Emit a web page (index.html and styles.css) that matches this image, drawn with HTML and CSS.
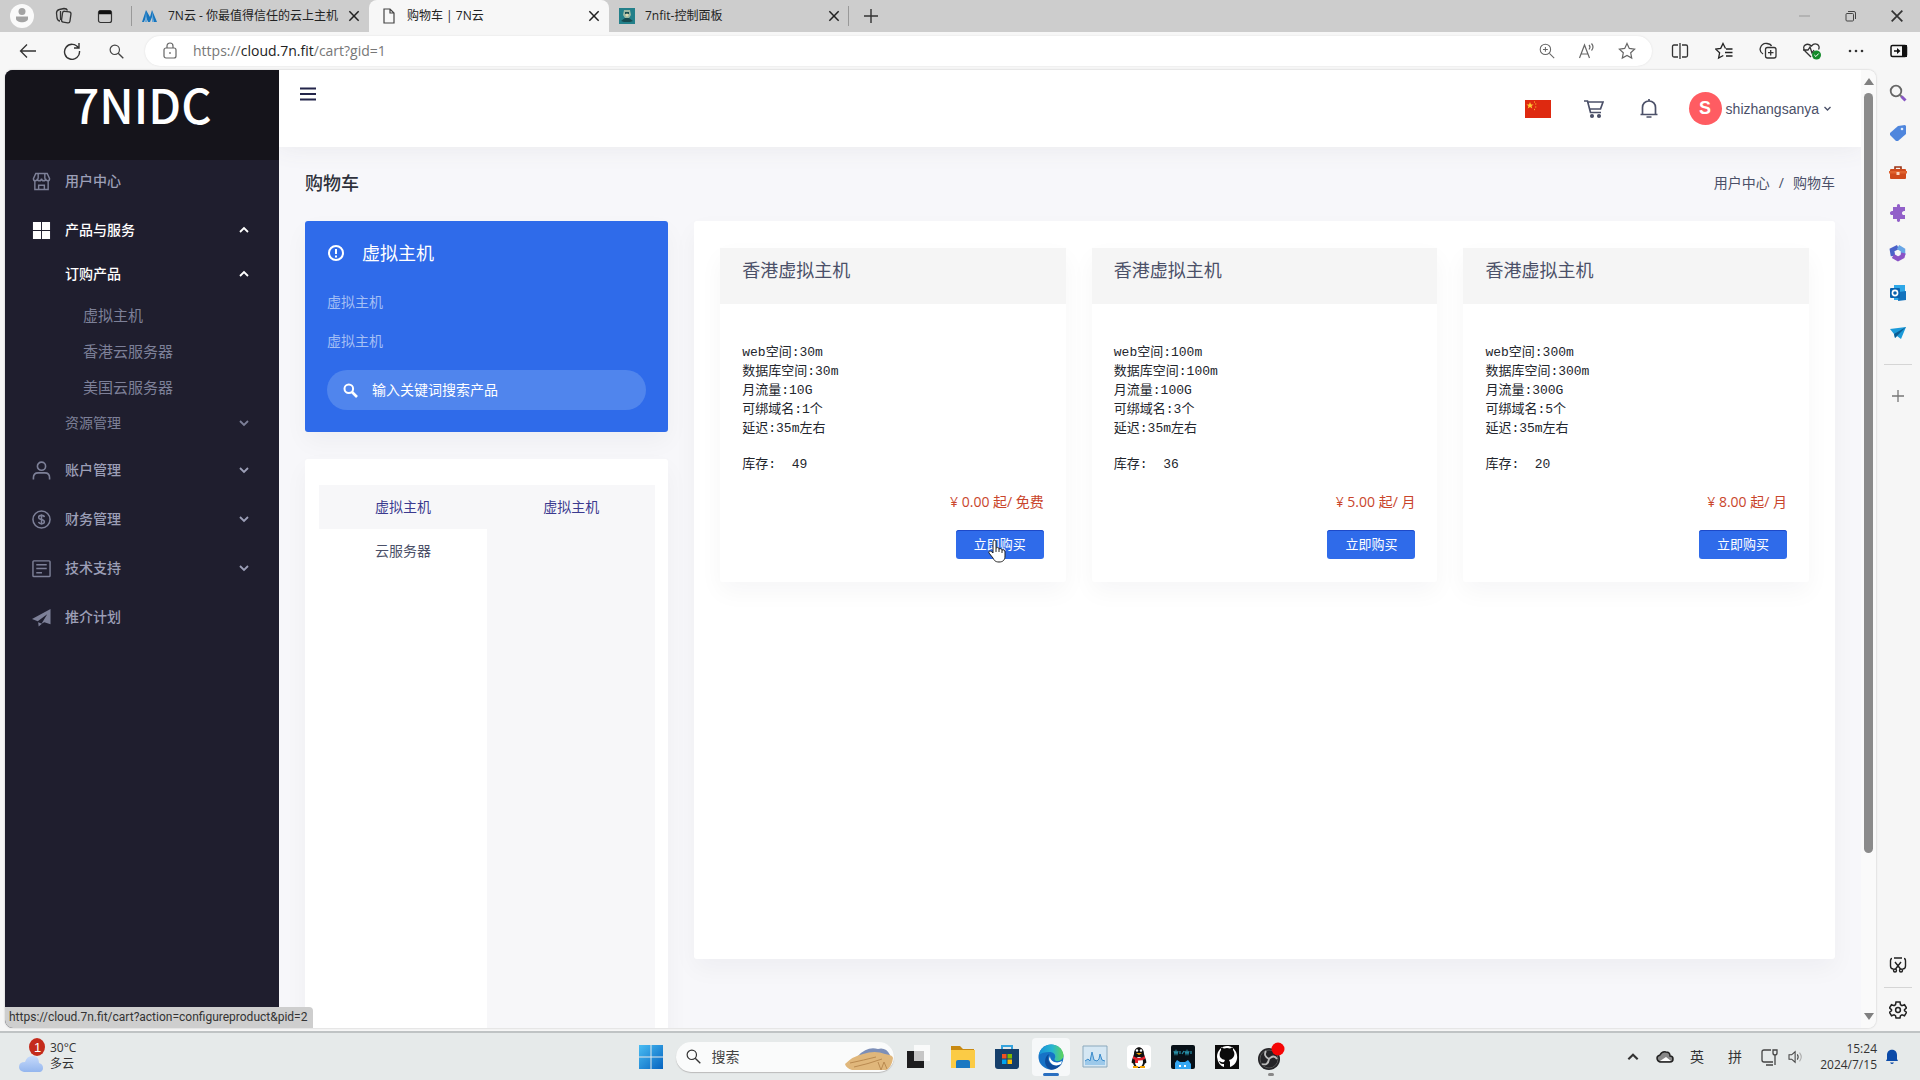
FILE: index.html
```
<!DOCTYPE html>
<html lang="zh-CN">
<head>
<meta charset="utf-8">
<title>购物车 | 7N云</title>
<link rel="stylesheet" href="styles.css">
</head>
<body>
<svg class="defs" aria-hidden="true">
  <symbol id="close" viewBox="0 0 12 12"><path d="M2 2l8 8M10 2l-8 8" fill="none" stroke="currentColor" stroke-width="1.3"/></symbol>
  <symbol id="down" viewBox="0 0 12 12"><path d="M2 4l4 4 4-4" fill="none" stroke="currentColor" stroke-width="1.8"/></symbol>
  <symbol id="up" viewBox="0 0 12 12"><path d="M2 8l4-4 4 4" fill="none" stroke="currentColor" stroke-width="1.8"/></symbol>
  <symbol id="lens" viewBox="0 0 20 20"><circle cx="8" cy="8" r="5.5" fill="none" stroke="currentColor" stroke-width="1.4"/><path d="M12 12l6 6" stroke="currentColor" stroke-width="1.6"/></symbol>
  <symbol id="favicon" viewBox="0 0 16 16"><path d="M0 0h16v16H0z" fill="#23808a"/><path d="M5 2h6l1 5-2 3H6L4 7z" fill="#9bb8a4"/><path d="M6 4h4v2H6zM2 13l4-3h4l4 3-3 1H5z" fill="#174b50"/><circle cx="8" cy="7" r="1.5" fill="#e0d8ae"/></symbol>
</svg>

<header class="tabstrip">
  <button class="strip-btn" aria-label="用户"><svg width="26" height="26" viewBox="0 0 26 26"><circle cx="13" cy="13" r="12" fill="#fafafa"/><circle cx="13" cy="8.500" r="3.500" fill="#a3a3a3"/><path d="M7 13.500h12v2c0 5-12 5-12 0z" fill="#a3a3a3"/></svg></button>
  <button class="strip-btn" aria-label="工作区"><svg width="18" height="18" viewBox="0 0 18 18" fill="none" stroke="#333" stroke-width="1.300"><rect x="7" y="4.500" width="8.500" height="11" rx="2" transform="rotate(8 11 10)"/><path d="M5 14c-2 0-2.500-1-3-3L1.500 6c0-2 1-3 3-3.500L9 1.500c2 0 3 .5 3.500 2M5.500 4v9"/></svg></button>
  <button class="strip-btn" aria-label="标签页操作"><svg width="16" height="16" viewBox="0 0 16 16" fill="none" stroke="#333" stroke-width="1.200"><rect x="1.500" y="2.500" width="13" height="12" rx="2"/><path d="M2 4.500h12" stroke="#111" stroke-width="3.500"/></svg></button>
  <nav class="tabs">
    <div class="tab first">
      <svg class="fav" viewBox="0 0 16 16"><path d="M0 14L4 2l4 7 2-7 5 12h-3l-2-5-2 5H6l-2-5-2 5z" fill="#1675bd"/><path d="M4 3l1 11H3zM10 3l2 11h-2z" fill="#64a7dc"/></svg>
      <span class="tab-title">7N云 - 你最值得信任的云上主机</span>
      <button class="tab-x" aria-label="关闭"><svg width="14" height="14"><use href="#close"/></svg></button>
    </div>
    <div class="tab active">
      <svg class="fav" viewBox="0 0 16 16"><path d="M3 1h6l4 4v10H3zM9 1v4h4" fill="none" stroke="#444" stroke-width="1.200"/></svg>
      <span class="tab-title">购物车 | 7N云</span>
      <button class="tab-x" aria-label="关闭"><svg width="14" height="14"><use href="#close"/></svg></button>
    </div>
    <div class="tab">
      <svg class="fav"><use href="#favicon"/></svg>
      <span class="tab-title">7nfit-控制面板</span>
      <button class="tab-x" aria-label="关闭"><svg width="14" height="14"><use href="#close"/></svg></button>
    </div>
  </nav>
  <button class="strip-btn new" aria-label="新建标签页"><svg width="16" height="16" viewBox="0 0 16 16"><path d="M8 1v14M1 8h14" stroke="#333" stroke-width="1.400"/></svg></button>
  <div class="win">
    <button aria-label="最小化"><svg width="12" height="12"><path d="M0 6h11" stroke="#999" stroke-width="1"/></svg></button>
    <button aria-label="还原"><svg width="12" height="12" fill="none" stroke="#444"><rect x="1" y="3.500" width="7.500" height="7.500" rx="1"/><path d="M3 1.500h6q1.500 0 1.500 1.500v6"/></svg></button>
    <button aria-label="关闭窗口"><svg width="16" height="16"><use href="#close"/></svg></button>
  </div>
</header>

<div class="toolbar">
  <button aria-label="后退"><svg width="18" height="18" viewBox="0 0 18 18" fill="none" stroke="#333" stroke-width="1.300"><path d="M17 9H2M8 2.500L1.500 9 8 15.500"/></svg></button>
  <button aria-label="刷新"><svg width="18" height="18" viewBox="0 0 18 18" fill="none" stroke="#333" stroke-width="1.400"><path d="M15.500 6A7.500 7.500 0 1 0 16.500 9M16 1v5h-5"/></svg></button>
  <button aria-label="搜索"><svg width="17" height="17"><use href="#lens"/></svg></button>
  <div class="address">
    <button aria-label="站点信息"><svg width="16" height="18" viewBox="0 0 16 18" fill="none" stroke="#666" stroke-width="1.200"><rect x="2" y="6" width="12" height="10" rx="2"/><path d="M5 6V4c0-4 6-4 6 0v2M8 10v2"/></svg></button>
    <p class="url">https://<b>cloud.7n.fit</b>/cart?gid=1</p>
    <button aria-label="缩放"><svg width="16" height="16" viewBox="0 0 20 20" fill="none" stroke="#666" stroke-width="1.300"><circle cx="8" cy="8" r="6.500"/><path d="M13 13l6 6M8 5v6M5 8h6"/></svg></button>
    <button aria-label="朗读"><svg width="18" height="18" viewBox="0 0 18 18" fill="none" stroke="#666" stroke-width="1.200"><path d="M1.500 16L6.500 3l5 13M3 12h7M11 3q2 2 0 4.500M13.500 1.500q3 3.500 0 7"/></svg></button>
    <button aria-label="收藏"><svg width="18" height="18" viewBox="0 0 18 18" fill="none" stroke="#666" stroke-width="1.200"><path d="M9 1.500l2.300 4.900 5.300.7-3.900 3.700 1 5.300L9 13.500l-4.700 2.600 1-5.300L1.400 7.100l5.300-.7z"/></svg></button>
  </div>
  <button aria-label="分屏"><svg width="18" height="18" viewBox="0 0 18 18" fill="none" stroke="#333" stroke-width="1.300"><path d="M7 3H3Q1.500 3 1.500 4.500v9Q1.500 15 3 15h4M11 3h4q1.500 0 1.500 1.500v9q0 1.500-1.500 1.500h-4M9 1v16"/></svg></button>
  <button aria-label="收藏夹"><svg width="18" height="18" viewBox="0 0 18 18" fill="none" stroke="#222" stroke-width="1.300"><path d="M10.500 6.500L8 1.500 5.700 6.400l-5 .7 3.900 3.700-1 5.300 4.700-2.600M11 7h6.500M10 10.500h7.500M11 14h6.500"/></svg></button>
  <button aria-label="集锦"><svg width="18" height="18" viewBox="0 0 18 18" fill="none" stroke="#333" stroke-width="1.300"><rect x="6.500" y="5.500" width="10.500" height="10.500" rx="2"/><path d="M11.700 8v5.500M9 10.700h5.500M4 12C1 10 .5 8 1.500 5.500S5 1 8 1.500s4 1 4.500 2.500"/></svg></button>
  <button aria-label="浏览器概要"><svg width="20" height="18" viewBox="0 0 20 18"><path d="M9 15L3 9C-1 4 5 0 9.500 4 13-.5 19 3 16.500 7.500M1 8h5l2-3 2 6 2-3" fill="none" stroke="#333" stroke-width="1.300"/><circle cx="14.500" cy="13" r="4.500" fill="#138a2a"/><path d="M12.300 13l1.600 1.500 2.800-3" fill="none" stroke="#fff"/></svg></button>
  <button aria-label="更多"><svg width="16" height="4" fill="#333"><circle cx="2" cy="2" r="1.300"/><circle cx="8" cy="2" r="1.300"/><circle cx="14" cy="2" r="1.300"/></svg></button>
  <button class="rail-toggle" aria-label="边栏"><svg width="18" height="14" viewBox="0 0 18 14"><rect x="1" y="1.500" width="15.500" height="11" rx="1.500" fill="none" stroke="#111" stroke-width="1.500"/><path d="M12 1h5v12h-5zM4 6.300h3V4l3.500 3L7 10V7.700H4z" fill="#111"/></svg></button>
</div>

<div class="window">
  <div class="viewport">
    <aside class="sidebar">
      <a class="logo" href="#">7NIDC</a>
      <ul class="menu">
        <li><a class="row" href="#"><svg class="mi" viewBox="0 0 20 20" fill="none" stroke="currentColor" stroke-width="1.500"><path d="M3 9v9.500h14V9M4 1.500h12L18.500 7c0 3-4 3-4.300 0 0 3-4 3-4.200 0-.2 3-4.200 3-4.200 0C5.500 10 1.500 10 1.500 7zM7 18.500V14h6v4.500M6.500 2v5M13.500 2v5"/></svg><span>用户中心</span></a></li>
        <li>
          <a class="row on" href="#"><svg class="mi" viewBox="0 0 20 20" fill="currentColor"><path d="M1 1h8.500v8.500H1zM10.500 1H19v8.500h-8.500zM1 10.500h8.500V19H1zM10.500 10.500H19V19h-8.500z"/></svg><span>产品与服务</span><svg class="arr"><use href="#up"/></svg></a>
          <ul class="sub">
            <li><a class="row two on" href="#"><span>订购产品</span><svg class="arr"><use href="#up"/></svg></a>
              <ul class="leaf">
                <li><a href="#">虚拟主机</a></li>
                <li><a href="#">香港云服务器</a></li>
                <li><a href="#">美国云服务器</a></li>
              </ul>
            </li>
            <li><a class="row two" href="#"><span>资源管理</span><svg class="arr"><use href="#down"/></svg></a></li>
          </ul>
        </li>
        <li><a class="row" href="#"><svg class="mi" viewBox="0 0 20 20" fill="none" stroke="currentColor" stroke-width="1.700"><circle cx="10" cy="5.500" r="4.300"/><path d="M1.500 19.500v-2c0-3 2-5 5-5h7c3 0 5 2 5 5v2"/></svg><span>账户管理</span><svg class="arr"><use href="#down"/></svg></a></li>
        <li><a class="row" href="#"><svg class="mi" viewBox="0 0 20 20" fill="none" stroke="currentColor" stroke-width="1.600"><circle cx="10" cy="10" r="9"/><path d="M13 7.500C12.500 5 7 5 7 7.800c0 2.700 6 1.700 6 4.500s-5.500 2.700-6 .2M10 4.500v11"/></svg><span>财务管理</span><svg class="arr"><use href="#down"/></svg></a></li>
        <li><a class="row" href="#"><svg class="mi" viewBox="0 0 20 20" fill="none" stroke="currentColor" stroke-width="1.500"><rect x="1" y="2" width="18" height="16.500" rx="1"/><path d="M4.500 6h11M4.500 10h11M4.500 14.500h6"/></svg><span>技术支持</span><svg class="arr"><use href="#down"/></svg></a></li>
        <li><a class="row" href="#"><svg class="mi" viewBox="0 0 20 20" fill="currentColor"><path d="M19.500 1v16L13 15l-3 1.500 6-10L6 14l-6-2.500zM6.500 15l4 1.500L7 19.500z"/></svg><span>推介计划</span></a></li>
      </ul>
    </aside>

    <div class="page">
      <header class="topbar">
        <button class="burger" aria-label="菜单"><svg width="16" height="14"><path d="M0 1.500h16M0 7h16M0 12.500h16" stroke="#23254a" stroke-width="2.200"/></svg></button>
        <button class="flag" aria-label="中文"><svg width="26" height="18" viewBox="0 0 26 18"><path d="M0 0h26v18H0z" fill="#de2910"/><path d="M5 2l1 2.500h2.600L6.500 6l.8 2.500L5 7 2.700 8.500 3.500 6 1.400 4.500H4z" fill="#fc3"/><path d="M9 1l1 1-1 1zM10.500 3l1 1-1 1zM10.500 6l1 1-1 1zM9 8.500l1 1-1 1z" fill="#fc3"/></svg></button>
        <button class="top-icon" aria-label="购物车"><svg width="20" height="20" viewBox="0 0 20 20" fill="none" stroke="#4b5068" stroke-width="1.700"><path d="M0 2h3.500l3 11.500h10.500M4 3h15l-2.500 7H6"/><circle cx="8" cy="17" r="1.200" fill="#4b5068"/><circle cx="15" cy="17" r="1.200" fill="#4b5068"/></svg></button>
        <button class="top-icon" aria-label="通知"><svg width="20" height="21" viewBox="0 0 20 21" fill="none" stroke="#4b5068" stroke-width="1.700"><path d="M1.500 16.500h17M3.500 16V9.500C3.500 6 6 3 10 3s6.500 3 6.500 6.500V16M10 3V1M7.500 19h5"/></svg></button>
        <button class="user"><span class="avatar">S</span><span>shizhangsanya</span><svg width="9" height="9"><use href="#down"/></svg></button>
      </header>

      <main class="content">
        <div class="heading">
          <h1>购物车</h1>
          <nav class="crumb"><a href="#">用户中心</a><span>/</span><span>购物车</span></nav>
        </div>
        <div class="columns">
          <div class="left">
            <section class="intro">
              <h2><svg width="18" height="18" viewBox="0 0 18 18" fill="none" stroke="#fff" stroke-width="2"><circle cx="9" cy="9" r="7"/><path d="M9 5v5M9 11.500v2"/></svg>虚拟主机</h2>
              <p>虚拟主机</p>
              <p>虚拟主机</p>
              <label class="search"><svg width="15" height="15" viewBox="0 0 15 15" fill="none" stroke="#fff" stroke-width="2"><circle cx="5.800" cy="5.800" r="4.300"/><path d="M9 9l5 5" stroke-width="2.600"/></svg><input type="text" aria-label="搜索产品" placeholder="输入关键词搜索产品"></label>
            </section>
            <section class="groups">
              <div class="group"><a class="chosen" href="#">虚拟主机</a><a href="#">云服务器</a></div>
              <div class="group shaded"><a class="chosen" href="#">虚拟主机</a></div>
            </section>
          </div>
          <section class="products">
            <article class="product">
              <h3>香港虚拟主机</h3>
              <div class="body">
                <div class="spec">web空间:30m<br>数据库空间:30m<br>月流量:10G<br>可绑域名:1个<br>延迟:35m左右<p>库存: &nbsp;49</p></div>
                <p class="price">¥ 0.00 起/ 免费</p>
                <div class="buy-wrap"><button class="buy">立即购买</button>
                <svg class="cursor" width="18" height="24" viewBox="0 0 18 24"><path d="M5 14V3c0-2.500 3-2.500 3 0v6c2-1 3-.3 3 1 1.500-.8 2.800-.2 3 1 2-.6 3 .5 3 2v4c0 4-2 6-6 6-4 0-5-2-6-4l-4-5c-1-2 1.500-3 4 0z" fill="#fff" stroke="#222"/><path d="M8 9v4M11 10v3M14 11v3" stroke="#222"/></svg></div>
              </div>
            </article>
            <article class="product">
              <h3>香港虚拟主机</h3>
              <div class="body">
                <div class="spec">web空间:100m<br>数据库空间:100m<br>月流量:100G<br>可绑域名:3个<br>延迟:35m左右<p>库存: &nbsp;36</p></div>
                <p class="price">¥ 5.00 起/ 月</p>
                <div class="buy-wrap"><button class="buy">立即购买</button></div>
              </div>
            </article>
            <article class="product">
              <h3>香港虚拟主机</h3>
              <div class="body">
                <div class="spec">web空间:300m<br>数据库空间:300m<br>月流量:300G<br>可绑域名:5个<br>延迟:35m左右<p>库存: &nbsp;20</p></div>
                <p class="price">¥ 8.00 起/ 月</p>
                <div class="buy-wrap"><button class="buy">立即购买</button></div>
              </div>
            </article>
          </section>
        </div>
      </main>
    </div>
    <div class="scroll"><i class="tri"></i><i class="thumb"></i><i class="tri flip"></i></div>
    <div class="status">https://cloud.7n.fit/cart?action=configureproduct&amp;pid=2</div>
  </div>

  <nav class="rail">
    <button aria-label="搜索"><svg width="18" height="18" viewBox="0 0 18 18" fill="none"><circle cx="7" cy="7" r="5.300" stroke="#666" stroke-width="1.800"/><path d="M11 11l2 2" stroke="#777" stroke-width="2"/><path d="M12.500 12.500l4 4" stroke="#8857c4" stroke-width="3"/></svg></button>
    <button aria-label="购物"><svg width="18" height="18" viewBox="0 0 18 18"><path d="M9 2l7-1 1 1v8L9 17H7L1 11V9z" fill="#4f86dd"/><circle cx="13" cy="5" r="1.300" fill="#dceaff"/></svg></button>
    <button aria-label="工具"><svg width="18" height="18" viewBox="0 0 18 18"><path d="M6 6V3h6v3" fill="none" stroke="#9c3314" stroke-width="1.600"/><rect x="1" y="5" width="16" height="10" rx="1" fill="#cf4a1c"/><path d="M0 7h18v2.500H0z" fill="#e0632f"/><path d="M7.500 8h3v3h-3z" fill="#fbd8c4"/></svg></button>
    <button aria-label="游戏"><svg width="18" height="20" viewBox="0 0 18 20"><path d="M4 4h4c-1-4 4-4 3 0h5v4c-4-1-4 5 0 4v4h-5c1 4-4 4-3 0H4v-4c-4 1-4-5 0-4z" fill="#9260c9"/></svg></button>
    <button aria-label="Microsoft 365"><svg width="18" height="18" viewBox="0 0 18 18" fill="none" stroke-width="4.500"><path d="M4 12L3 6l6-3" stroke="#4b62c9"/><path d="M9 3l5 3v5" stroke="#68a6e6"/><path d="M14.500 9l-1 3.500L9 15l-5-3" stroke="#8a53c6"/></svg></button>
    <button aria-label="Outlook"><svg width="18" height="18" viewBox="0 0 18 18"><path d="M5 1h11v15H5z" fill="#2fa8e8"/><path d="M10 8l7-1v9l-8 1z" fill="#1373bd"/><rect x="1" y="4" width="10" height="10" rx="1" fill="#0a62ad"/><circle cx="6" cy="9" r="2.600" fill="none" stroke="#fff" stroke-width="1.600"/></svg></button>
    <button aria-label="Drop"><svg width="18" height="18" viewBox="0 0 18 18"><path d="M1 5l16-2-5 12-4-3-2 2-1-4z" fill="#1b9ad9"/><path d="M5 10l12-7-9 9-2 2z" fill="#0c5c93"/></svg></button>
    <hr>
    <button aria-label="添加"><svg width="14" height="14"><path d="M7 1v12M1 7h12" stroke="#777" stroke-width="1.300"/></svg></button>
    <span class="grow"></span>
    <button class="low" aria-label="截图"><svg width="18" height="16" viewBox="0 0 18 16" fill="none" stroke="#222" stroke-width="1.400"><path d="M5 1h8M3 1.500Q1.500 1.500 1.500 4v5q0 3 3 3M15 1.500q1.500 0 1.500 2.500v5q0 3-3 3M6 5l5.500 7M12 5l-5.500 7"/><circle cx="6" cy="13.500" r="1.500"/><circle cx="12" cy="13.500" r="1.500"/></svg></button>
    <hr>
    <button class="low" aria-label="设置"><svg width="18" height="18" viewBox="0 0 18 18" fill="none" stroke="#222" stroke-width="1.500"><path d="M7 1h4l.5 2.700 1.500.9 2.500-1 2 3.400-2 1.700v1l2 1.700-2 3.400-2.500-1-1.500.9L11 17H7l-.5-2.300-1.500-.9-2.500 1-2-3.400 2-1.700v-1l-2-1.700 2-3.400 2.500 1 1.500-.9z"/><circle cx="9" cy="9" r="2.400"/></svg></button>
  </nav>
</div>

<footer class="taskbar">
  <div class="weather">
    <svg width="28" height="38" viewBox="0 0 28 38"><defs><linearGradient id="cloud" y2="1" x2="0"><stop stop-color="#c6dafb"/><stop offset="1" stop-color="#94b6ee"/></linearGradient></defs><path d="M6 36q-5-1-5-5 0-5 6-5 2-7 9-6 5 1 5 7 4 1 4 5 0 3-3 4z" fill="url(#cloud)"/><ellipse cx="19" cy="11" rx="8" ry="9" fill="#c42b1c"/><text x="16" y="16" font-size="13" fill="#fff">1</text></svg>
    <p>30°C<br>多云</p>
  </div>
  <div class="apps">
    <button aria-label="开始"><svg width="24" height="24" viewBox="0 0 24 24"><defs><linearGradient id="win" x2="1" y2="1"><stop stop-color="#49bdf3"/><stop offset="1" stop-color="#0663c0"/></linearGradient></defs><path d="M0 0h11.500v11.500H0zM12.500 0H24v11.500H12.500zM0 12.500h11.500V24H0zM12.500 12.500H24V24H12.500z" fill="url(#win)"/></svg></button>
    <label class="find"><svg width="17" height="17"><use href="#lens"/></svg><input type="text" placeholder="搜索" aria-label="搜索"><svg width="50" height="30" viewBox="0 0 50 30"><path d="M14 14q9-10 20-7 8-2 12 6v4H14z" fill="#7d8fb8"/><path d="M1 22q8-8 18-10 12-4 22 0 8 1 8 4-1 8-6 12H8q-6-2-7-6z" fill="#e0b77b"/><path d="M6 21q14-3 26-6M10 25q14-3 28-8M34 20l3 8 3-8 3 7" fill="none" stroke="#b98a50"/></svg></label>
    <button aria-label="任务视图"><svg width="26" height="26" viewBox="0 0 26 26"><path d="M1 7h17v17H1z" fill="#1d1d1f"/><path d="M8 1h16v16H8z" fill="#fff" opacity=".75"/></svg></button>
    <button aria-label="文件资源管理器"><svg width="26" height="26" viewBox="0 0 26 26"><path d="M1 2h9l3 3h11v7H1z" fill="#c98a12"/><path d="M1 6h24v18H1z" fill="#fbcb45"/><path d="M6 24v-6q0-2 2-2h10q2 0 2 2v6z" fill="#1a78c2"/></svg></button>
    <button aria-label="Microsoft Store"><svg width="26" height="26" viewBox="0 0 26 26"><path d="M8 6V2h10v4" fill="none" stroke="#36a3dd" stroke-width="2"/><path d="M1 5h24v17q0 3-3 3H4q-3 0-3-3z" fill="#153f6b"/><path d="M8 10h4.500v4.500H8z" fill="#f25022"/><path d="M13.500 10H18v4.500h-4.500z" fill="#7fba00"/><path d="M8 15.500h4.500V20H8z" fill="#00a4ef"/><path d="M13.500 15.500H18V20h-4.500z" fill="#ffb900"/></svg></button>
    <button class="current" aria-label="Microsoft Edge"><svg width="26" height="26" viewBox="0 0 26 26"><defs><linearGradient id="edge" x2="1"><stop stop-color="#1691d8"/><stop offset=".55" stop-color="#28b6cf"/><stop offset="1" stop-color="#5ed557"/></linearGradient></defs><circle cx="13" cy="13" r="12.500" fill="#1672c6"/><path d="M1 11C3-3 24-3 25.500 11c.5 6-9 8-9 4 2-3 0-7-5-7C7 8 3 9 1 11z" fill="url(#edge)"/><path d="M11.500 10C8 14 11 22 18 21.500q4 0 6-2-5 7-12 6C5 22 6 12 11.500 10z" fill="#0d4c9b"/><path d="M12 12c0 6 7 8 12 5l-1 3c-5 3-11 1-12-5z" fill="#fff"/></svg></button>
    <button aria-label="性能监视"><svg width="26" height="24" viewBox="0 0 26 24"><path d="M1 1h24v21H1z" fill="#d5e7f3" stroke="#8ba9bd"/><path d="M3 20v-4l3-2 2 2 2-9 2 8 3 1 2-2 1-5 2 6 3 1v4z" fill="#9cc9ea"/><path d="M3 16l3-2 2 2 2-9 2 8 3 1 2-2 1-5 2 6 3 1" fill="none" stroke="#3c8ccb"/></svg></button>
    <button aria-label="QQ"><svg width="26" height="26" viewBox="0 0 26 26"><rect x="1" y="1" width="24" height="24" rx="4" fill="#fff"/><path d="M8 10c0-9 10-9 10 0l2 6q1 4-1 3-1 5-6 5t-6-5q-2 1-1-3z" fill="#111"/><ellipse cx="13" cy="18" rx="4" ry="5" fill="#fff"/><path d="M7 12q6 4 12 0v3q-6 3-12 0zM9 14h3v5H9z" fill="#e3202c"/><path d="M10 9h6l-3 2zM7 22h5v2H7zM14 22h5v2h-5z" fill="#f5a300"/><circle cx="11" cy="6.500" r="1.200" fill="#fff"/><circle cx="15" cy="6.500" r="1.200" fill="#fff"/></svg></button>
    <button aria-label="应用"><svg width="26" height="26" viewBox="0 0 26 26"><rect x="1" y="1" width="24" height="24" rx="2" fill="#071017"/><path d="M4 7l1 3 1-3 1 3 1-3M10 7v3M12 10l2-3M15 7l1 3 1-3 1 3 1-3M21 7v3" fill="none" stroke="#278ea6" stroke-width="1.200"/><path d="M5 25v-6l2-3 3 2h5l3-2 3 4v5z" fill="#35a7f2"/><path d="M10 21v2M15 21v2" stroke="#fff" stroke-width="2"/></svg></button>
    <button aria-label="GitHub"><svg width="26" height="26" viewBox="0 0 26 26"><path d="M1 1h24v24H1z" fill="#0b0b0b"/><path d="M10 23v-3c-3 .5-4-1-5-3 2 0 2 2 5 1l1-2c-5-1-6-4-5-8l1-2V3l3 1.500q3-1 6 0L19 3v3c3 4 1 9-4 10l1 2v5c9-3 9-14 3-19C12-1 3 4 3 13q1 8 7 10z" fill="#fff"/></svg></button>
    <button class="running" aria-label="OBS"><svg width="28" height="30" viewBox="0 0 28 30"><circle cx="12" cy="17" r="11" fill="#252427"/><circle cx="12" cy="17" r="9" fill="none" stroke="#555"/><path d="M9 9q-3 5 3 8 5-5 8 0M12 17q-1 7-7 5" fill="none" stroke="#bbb" stroke-width="1.800"/><circle cx="21" cy="7" r="6.500" fill="#f50505"/></svg></button>
  </div>
  <div class="tray">
    <button aria-label="更多图标"><svg width="14" height="14"><use href="#up"/></svg></button>
    <button aria-label="OneDrive"><svg width="18" height="14" viewBox="0 0 18 14"><path d="M4 12q-3-1-3-4 0-2 3-3 2-4 6-3 4 0 4 4 3 0 3 3t-3 3z" fill="#888" stroke="#222" stroke-width="1.500"/><path d="M4 11l6-4 5 4z" fill="#fff"/></svg></button>
    <button class="ime">英</button>
    <button class="ime two">拼</button>
    <button class="net" aria-label="网络"><svg width="18" height="18" viewBox="0 0 18 18" fill="none" stroke="#444" stroke-width="1.300"><path d="M10 2H3Q1 2 1 4v8q0 2 2 2h9M5 17h7M14 7v10M12 2v3q0 2 2 2t2-2V2z"/></svg></button>
    <button class="net" aria-label="音量"><svg width="16" height="14" viewBox="0 0 18 16" fill="none" stroke="#444" stroke-width="1.200"><path d="M1 5.500h3L8 2v12l-4-3.500H1zM10.500 5q2 3 0 6"/><path d="M13 3q4 5 0 10" stroke="#aaa"/></svg></button>
    <p class="clock">15:24<br>2024/7/15</p>
    <button class="bell" aria-label="通知"><svg width="14" height="16" viewBox="0 0 14 16" fill="#0b4aa8"><path d="M1 12l1-2V6c0-7 10-7 10 0v4l1 2zM5 13.500h4q-2 3-4 0z"/></svg></button>
  </div>
</footer>
</body>
</html>
```

FILE: styles.css
```
* { box-sizing: border-box; }
body {
  margin: 0;
  height: 100vh;
  display: flex;
  flex-direction: column;
  overflow: hidden;
  background: #f6f6f6;
  color: #333;
  font: 14px/20px "Open Sans", "Noto Sans CJK SC", sans-serif;
}
button, input { font: inherit; color: inherit; border: 0; background: none; padding: 0; margin: 0; }
button { display: flex; align-items: center; justify-content: center; flex: none; }
a { color: inherit; text-decoration: none; }
h1, h2, h3, p, ul { margin: 0; padding: 0; font-weight: normal; }
ul { list-style: none; }
svg { flex: none; }
.defs { position: absolute; width: 0; height: 0; }

/* browser tabs */
.tabstrip { display: flex; flex: none; height: 32px; background: #cdcdcd; }
.strip-btn { width: 41px; }
.tabstrip > .strip-btn:first-child { width: 43px; }
.tabs { display: flex; margin-left: 6px; font-size: 12px; color: #222; }
.tab { display: flex; align-items: center; width: 240px; padding: 0 7px 0 10px; position: relative; }
.tab.first { width: 238px; padding-left: 11px; }
.tab.first::before, .tab:last-child::after { content: ""; width: 1px; height: 20px; background: #999; position: absolute; top: 6px; left: 0; }
.tab:last-child::after { left: auto; right: 0; }
.tab.active { background: #f7f7f7; border-radius: 8px 8px 0 0; padding-left: 12px; }
.fav { width: 16px; height: 16px; margin-right: 10px; }
.tab-title { flex: 1; white-space: nowrap; }
.tab-x { width: 16px; margin-left: 2px; }
.new { width: 44px; }
.win { display: flex; margin-left: auto; }
.win button { width: 46px; }

/* address bar */
.toolbar { display: flex; flex: none; height: 38px; padding-left: 6px; background: #f7f7f7; color: #444; }
.toolbar > button { width: 44px; }
.toolbar > .rail-toggle { width: 42px; }
.address { display: flex; align-items: center; flex: 1; margin: 4px 6px 4px 7px; padding: 0 5px; background: #fff; border-radius: 15px; box-shadow: 0 0 2px #ddd; }
.address button { width: 40px; }
.url { flex: 1; padding-left: 3px; color: #777; }
.url b { font-weight: normal; color: #222; }

.window { display: flex; flex: 1; min-height: 0; padding: 0 0 3px 5px; }
.viewport { display: flex; flex: 1; position: relative; overflow: hidden; border-radius: 8px; background: #f7f7fa; box-shadow: 0 0 2px #bbb; }

/* site navigation */
.sidebar { width: 274px; flex: none; position: relative; z-index: 1; background: #1f1e2e; color: #9c9fb7; }
.logo { display: flex; justify-content: center; height: 90px; background: #15141b; color: #fff; font: 500 47px/67px "Noto Sans CJK SC", sans-serif; }
.menu { display: flex; flex-direction: column; gap: 7px; }
.row { display: flex; align-items: center; height: 42px; padding: 0 29px 0 27px; font-weight: 500; }
.mi { width: 19px; height: 19px; margin-right: 14px; color: #7d8098; }
.row span { flex: 1; }
.arr { width: 12px; height: 12px; }
.on, .on .mi { color: #fff; }
.sub { padding: 5px 0 1px; }
.row.two { height: 36px; padding-left: 60px; font-weight: 400; color: #7d8098; }
.row.two.on { color: #fff; font-weight: 500; }
.leaf { padding-top: 5px; }
.leaf a { display: block; padding-left: 78px; font-size: 15px; line-height: 36px; color: #7d8098; }

.page { flex: 1; min-width: 0; color: #4b5068; }
.topbar { display: flex; align-items: center; height: 77px; padding: 0 29px 0 21px; background: #fff; box-shadow: 0 0 24px #e8e8ec; }
.burger { margin-right: auto; align-self: flex-start; padding-top: 17px; }
.flag { margin-right: 33px; }
.top-icon { margin-right: 35px; }
.user { gap: 4px; margin-left: -5px; font: 14px/20px "Liberation Sans", sans-serif; }
.avatar { width: 33px; height: 33px; border-radius: 50%; background: #ff5c62; color: #fff; font-weight: bold; font-size: 18px; line-height: 33px; }

.content { padding: 24px 26px; }
.heading { display: flex; justify-content: space-between; align-items: center; height: 24px; margin-bottom: 26px; }
h1 { font-size: 18px; font-weight: 500; color: #2f323c; }
.crumb { display: flex; gap: 9px; }
.columns { display: grid; grid-template-columns: 121fr 380fr; gap: 26px; align-items: start; }
.left { display: grid; gap: 27px; }
.intro, .groups, .products, .product { border-radius: 3px; box-shadow: 0 10px 24px rgba(30, 35, 60, .04); }
.intro { padding: 20px 22px 22px; background: #2f6bea; color: #fff; }
.intro h2 { display: flex; align-items: center; gap: 17px; height: 24px; margin-bottom: 27px; font-size: 18px; }
.intro p { margin-bottom: 19px; color: #a4bff5; }
.search { display: flex; align-items: center; height: 40px; padding: 0 16px; border-radius: 20px; background: #5085ed; }
.search input { flex: 1; min-width: 0; margin-left: 14px; }
.search input::placeholder { color: #fff; opacity: 1; }
.groups { display: grid; grid-template-columns: 1fr 1fr; min-height: 640px; padding: 26px 13px 26px 14px; background: #fff; text-align: center; }
.group a { display: block; line-height: 44px; }
.group .chosen, .shaded { background: #f7f7f9; }
.group .chosen { color: #3b3a8f; }

.products { display: grid; grid-template-columns: repeat(3, 1fr); gap: 26px; align-items: start; min-height: 738px; padding: 27px 26px; background: #fff; }
.product h3 { padding: 9px 22px 21px; background: #f5f5f5; font-size: 18px; line-height: 26px; }
.body { padding: 39px 22px 23px; }
.spec { font: 13px/19px "Liberation Mono", "Noto Sans CJK SC", monospace; color: #23262d; }
.spec p { margin-top: 17px; }
.price { margin: 18px 0; text-align: right; color: #c9452b; }
.buy-wrap { display: flex; justify-content: flex-end; position: relative; }
.buy { width: 88px; height: 29px; border-radius: 3px; background: #2f6bea; color: #fff; font-size: 13px; box-shadow: inset 0 1px #1d49c9; padding-bottom: 2px; }
.cursor { position: absolute; right: 38px; top: 9px; }

.scroll { display: flex; flex-direction: column; align-items: center; width: 15px; padding: 8px 0; background: #fafafa; }
.thumb { width: 9px; height: 760px; margin: 8px 0 auto; border-radius: 5px; background: #8b8b8b; }
.tri { border: 5px solid transparent; border-top: 0; border-bottom: 7px solid #808080; }
.flip { transform: rotate(180deg); }
.status { position: absolute; z-index: 2; left: 0; bottom: 0; height: 21px; padding: 0 6px 0 4px; border-radius: 0 4px 0 0; background: #cecece; color: #333; font: 12px/21px Roboto, sans-serif; }

/* browser side rail */
.rail { display: flex; flex-direction: column; align-items: center; width: 44px; padding: 3px 0 7px; }
.rail button { width: 40px; height: 40px; }
.rail hr { width: 28px; margin: 11px 0; border: 0; border-top: 1px solid #d5d5d5; flex: none; }
.rail .low { height: 22px; }
.grow { flex: 1; }

/* taskbar */
.taskbar { display: grid; grid-template-columns: 1fr auto 1fr; flex: none; height: 49px; background: #e6eaea; border-top: 2px solid #bfc3c4; }
.weather { display: flex; gap: 4px; padding: 3px 0 0 18px; font-size: 12px; line-height: 16px; }
.weather p { padding-top: 4px; }
.weather text { font-family: "Liberation Sans", sans-serif; }
.apps { display: flex; align-items: center; padding-left: 1px; }
.apps button { width: 38px; height: 38px; margin: 0 3px; border-radius: 4px; position: relative; }
.find { display: flex; align-items: center; width: 218px; height: 30px; margin: 0 3px; padding-left: 9px; overflow: hidden; border-radius: 15px; background: #fafbfb; box-shadow: 0 1px 1px #bbb; }
.find input { flex: 1; min-width: 0; margin-left: 10px; }
.find input::placeholder { color: #444; opacity: 1; }
.current { background: #f6f8f9; }
.current::after, .running::after { content: ""; position: absolute; bottom: 0; left: 11px; width: 16px; height: 3px; border-radius: 2px; background: #2a6fc0; }
.running::after { left: 16px; width: 6px; background: #888; }
.tray { display: flex; justify-content: flex-end; align-items: center; padding-right: 20px; font-size: 12px; }
.tray button { width: 32px; }
.tray .ime { font-size: 14px; }
.tray .two { width: 44px; }
.tray .net { width: 26px; }
.tray .clock { width: 68px; line-height: 16px; text-align: right; }
.tray .bell { width: 16px; margin-left: 7px; }
```
